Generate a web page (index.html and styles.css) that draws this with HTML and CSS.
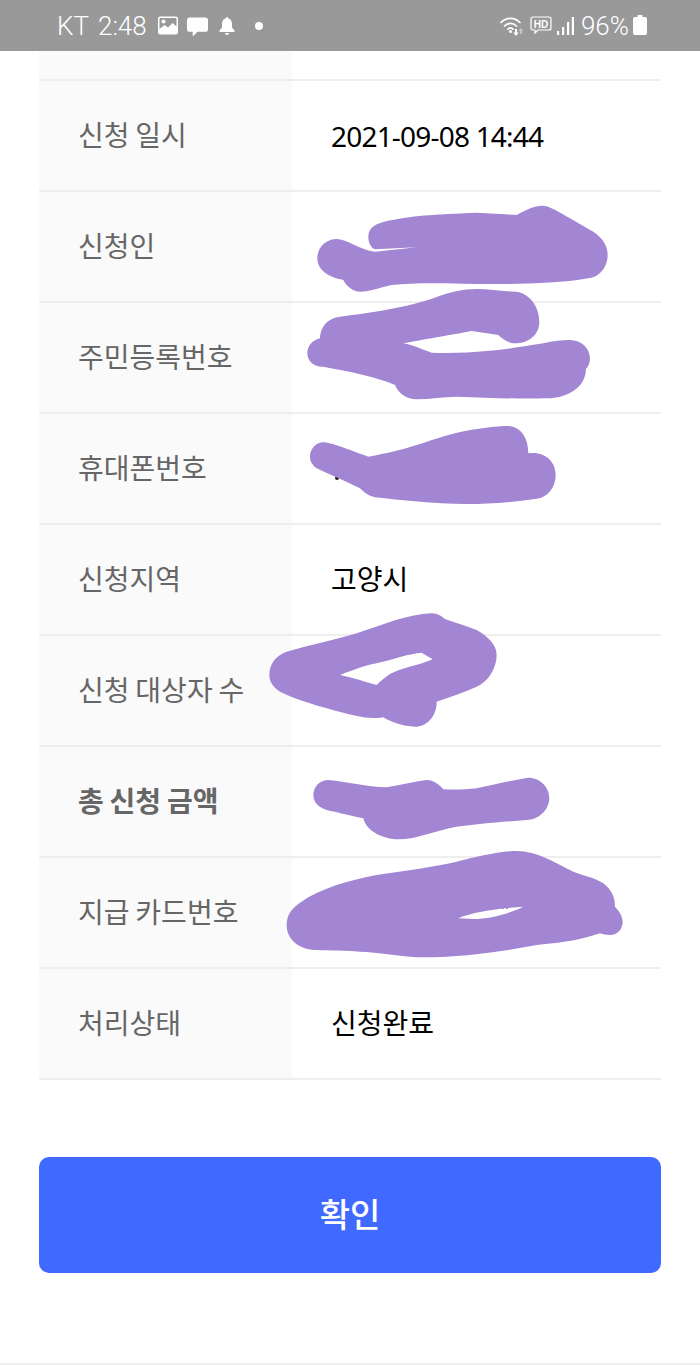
FILE: index.html
```html
<!DOCTYPE html>
<html lang="ko">
<head>
<meta charset="utf-8">
<title>신청 내역</title>
<link rel="stylesheet" href="styles.css">
</head>
<body>
<div class="page">
  <header class="status">
    <div class="status-left">
      <span class="carrier">KT</span>
      <span class="time">2:48</span>
      <svg class="ic ic-pic" viewBox="0 0 20 18"><path fill-rule="evenodd" fill="#fff" d="M2 0h16a2 2 0 0 1 2 2v14a2 2 0 0 1-2 2H2a2 2 0 0 1-2-2V2a2 2 0 0 1 2-2zM1.500 2v10.500l5-4 3.500 2.500 4.500-4.500 4 3.500V2a.5.5 0 0 0-.5-.5H2a.5.5 0 0 0-.5.5z"/><circle cx="5.500" cy="5" r="2" fill="#fff"/></svg>
      <svg class="ic ic-chat" viewBox="0 0 22 20"><path fill="#fff" d="M3 0h16a3 3 0 0 1 3 3v9a3 3 0 0 1-3 3h-8l-5 5v-5H3a3 3 0 0 1-3-3V3a3 3 0 0 1 3-3z"/></svg>
      <svg class="ic ic-bell" viewBox="0 0 16 18"><path fill="#fff" d="M8 0a1.500 1.500 0 0 1 1.500 1.500C12 2.300 13 4.500 13 7v3.500l2.500 3V15H.5v-1.500l2.500-3V7c0-2.500 1-4.700 3.500-5.500A1.500 1.500 0 0 1 8 0zM6 16h4a2 2 0 0 1-4 0z"/></svg>
      <span class="dot"></span>
    </div>
    <div class="status-right">
      <svg class="ic ic-wifi" viewBox="0 0 24 20"><g fill="none" stroke="#fff" stroke-width="1.700" stroke-linecap="round"><path d="M1 6.500C6.500 1 14.500 1 20 6.500"/><path d="M4.500 10c3.500-3.500 8.500-3.500 12 0"/><path d="M8 13.200c1.500-1.500 3.500-1.500 5 0"/></g><circle cx="10.500" cy="15.500" r="1.500" fill="#fff"/><path fill="#fff" d="M15 13h2v3.500h1.700L16 20l-2.700-3.500H15z"/><path fill="#c4c4c4" d="M21 12l2.500 3H22v3h-2v-3h-1.500z"/></svg>
      <svg class="ic ic-hd" viewBox="0 0 22 20"><path fill="none" stroke="#fff" stroke-width="1.200" d="M3 1h16a2 2 0 0 1 2 2v9a2 2 0 0 1-2 2H8l-3 3v-3H3a2 2 0 0 1-2-2V3a2 2 0 0 1 2-2z"/><text class="hd-label" x="11" y="11.500">HD</text></svg>
      <svg class="ic ic-signal" viewBox="0 0 17 18"><g fill="#fff"><rect x="0" y="14" width="2.200" height="4"/><rect x="5" y="10" width="2.200" height="8"/><rect x="10" y="5" width="2.200" height="13"/><rect x="14.800" y="0" width="2.200" height="18"/></g></svg>
      <span class="battery-text">96%</span>
      <svg class="ic ic-batt" viewBox="0 0 14 20"><path fill="#fff" d="M4.500 0h5v2H12a2 2 0 0 1 2 2v14a2 2 0 0 1-2 2H2a2 2 0 0 1-2-2V4a2 2 0 0 1 2-2h2.500z"/></svg>
    </div>
  </header>

  <main class="content">
    <dl class="table">
      <div class="row row-cut"><dt></dt><dd></dd></div>
      <div class="row"><dt>신청 일시</dt><dd class="date">2021-09-08 14:44</dd></div>
      <div class="row"><dt>신청인</dt><dd></dd></div>
      <div class="row"><dt>주민등록번호</dt><dd></dd></div>
      <div class="row"><dt>휴대폰번호</dt><dd></dd></div>
      <div class="row"><dt>신청지역</dt><dd>고양시</dd></div>
      <div class="row"><dt>신청 대상자 수</dt><dd></dd></div>
      <div class="row"><dt class="strong">총 신청 금액</dt><dd></dd></div>
      <div class="row"><dt>지급 카드번호</dt><dd></dd></div>
      <div class="row"><dt>처리상태</dt><dd>신청완료</dd></div>
    </dl>
    <button class="confirm" type="button">확인</button>
  </main>

  <svg class="scribbles" viewBox="0 0 700 1365">
    <circle class="speck" cx="337" cy="478" r="2"/>
    <circle class="speck" cx="503" cy="908" r=".8"/>
    <circle class="speck" cx="507" cy="908" r=".8"/>
    <g class="ink" transform="translate(260 190) scale(.3333)">
      <path d="M325,140 C325,110 350,100 385,92 C450,78 520,73 650,68 L770,75 C800,58 825,47 845,47 C870,47 890,62 1000,125 C1030,145 1043,170 1043,195 C1043,235 1015,262 985,265 C900,280 800,282 700,282 C600,282 480,275 395,285 C360,292 330,305 300,305 C280,305 260,290 250,270 C205,262 172,240 172,205 C172,170 200,147 230,147 C260,147 300,180 345,185 L470,172 L345,178 C335,175 325,160 325,140 Z"/>
      <path d="M180,445 C180,410 205,383 240,380 C320,372 450,350 520,325 C570,305 610,297 650,297 C690,297 730,305 770,305 C810,312 838,350 838,395 C838,435 805,460 765,460 C745,460 725,445 715,435 L635,423 C590,432 480,450 430,460 C460,465 490,480 515,488 C570,490 630,488 680,483 C740,478 800,468 850,460 C880,453 905,450 930,450 C965,450 990,475 990,505 C990,520 985,530 978,537 C978,590 925,625 860,625 C800,627 700,625 590,620 C550,620 510,628 470,628 C440,628 415,610 405,585 C350,560 270,545 190,530 C165,532 142,515 142,490 C142,465 160,450 180,445 Z"/>
      <path d="M150,800 C150,775 170,757 190,757 C215,757 280,785 325,800 C380,790 430,778 470,765 C530,745 580,728 620,722 C660,715 710,708 745,708 C780,710 805,740 805,790 C855,783 887,815 887,855 C887,895 860,925 825,927 C750,938 680,942 620,942 C520,942 420,930 345,922 C325,918 310,905 300,895 C260,875 200,850 170,835 C158,825 150,815 150,800 Z"/>
    </g>
    <g class="ink" transform="translate(260 600) scale(.3333)">
      <path d="M28,225 C28,190 50,165 80,155 C150,135 230,118 290,100 C360,78 440,42 515,40 C535,40 545,50 555,57 C590,70 620,78 650,90 C685,110 710,135 710,165 C710,205 685,245 650,260 C610,278 570,290 530,305 C530,350 500,380 465,380 C430,380 390,365 370,352 C350,358 300,352 250,338 C180,320 110,300 60,275 C40,262 28,245 28,225 Z M240,225 C280,210 320,195 350,190 C400,178 450,160 485,158 L518,178 C480,195 420,205 390,222 C375,232 360,245 350,255 C315,245 280,233 240,225 Z"/>
      <path d="M160,585 C160,560 180,540 205,540 C260,545 320,560 380,562 C420,555 460,545 500,540 C520,540 540,555 550,568 C590,570 620,568 650,565 C700,555 760,540 805,533 C840,533 868,560 868,595 C868,630 835,660 800,660 C730,665 650,672 590,680 C530,690 470,718 415,718 C370,718 320,695 310,655 C280,648 250,642 225,635 C190,632 160,615 160,585 Z"/>
      <path d="M80,975 C80,945 95,925 120,908 C180,865 270,840 350,825 C430,812 520,802 590,785 C650,770 720,753 770,753 C830,753 890,790 940,815 C980,830 1010,835 1030,850 C1055,870 1065,890 1065,920 C1080,935 1088,950 1088,965 C1088,990 1070,1005 1050,1005 C1040,1005 1030,1003 1020,1000 C950,1025 880,1030 830,1035 C730,1055 600,1072 500,1072 C420,1072 350,1055 300,1055 C260,1052 210,1052 170,1050 C120,1050 80,1020 80,975 Z M595,955 C640,935 720,925 790,920 C750,940 690,957 640,957 Z"/>
    </g>
  </svg>
</div>
</body>
</html>
```

FILE: styles.css
```css
* { box-sizing: border-box; }
html, body { margin: 0; padding: 0; background: #fff; }
body { font-family: "Noto Sans CJK KR", "Noto Sans", sans-serif; }

.page {
  position: relative;
  width: 700px;
  height: 1365px;
  overflow: hidden;
  display: flex;
  flex-direction: column;
  border-bottom: 2px solid #eeeff1;
}

.status {
  flex: none;
  height: 51px;
  background: #999;
  color: #fff;
  display: flex;
  justify-content: space-between;
  align-items: center;
  padding: 0 53px 0 57px;
  font-family: Roboto, sans-serif;
  font-size: 26px;
  font-weight: 300;
}
.status-left, .status-right { display: flex; align-items: center; }
.ic { display: block; flex: none; }
.carrier { margin-right: 9px; }
.time { margin-right: 11px; }
.ic-pic { width: 20px; height: 19px; margin-right: 9px; }
.ic-chat { width: 21px; height: 20px; margin-right: 11px; margin-top: 2px; }
.ic-bell { width: 16px; height: 18px; margin-right: 20px; }
.dot { width: 8px; height: 8px; border-radius: 50%; background: #fff; }
.ic-wifi { width: 24px; height: 20px; margin-right: 6px; }
.ic-hd { width: 22px; height: 20px; margin-right: 5px; }
.hd-label { font: 700 10px "Liberation Sans", sans-serif; fill: #fff; text-anchor: middle; }
.ic-signal { width: 17px; height: 18px; margin-right: 7px; }
.battery-text { margin-right: 4px; }
.ic-batt { width: 14px; height: 20px; margin-top: -2px; }

.content {
  flex: 1;
  padding: 0 39px;
  display: flex;
  flex-direction: column;
}
.table { margin: 0; }
.row {
  display: grid;
  grid-template-columns: 253px 1fr;
  height: 111px;
  border-bottom: 2px solid #eee;
  font-size: 28px;
}
.row-cut { height: 30px; }
.row dt {
  background: #fafafa;
  color: #666;
  padding: 0 0 4px 39px;
  word-spacing: -2px;
  display: flex;
  align-items: center;
}
.row dd {
  margin: 0;
  padding: 0 0 4px 39px;
  color: #000;
  display: flex;
  align-items: center;
}
.row dd.date {
  font-family: "Noto Sans", sans-serif;
  letter-spacing: -0.8px;
  padding-bottom: 0;
}
.row dt.strong { font-weight: 700; word-spacing: -2px; }

.confirm {
  margin-top: 77px;
  padding: 0 0 4px;
  height: 116px;
  flex: none;
  border: 0;
  border-radius: 10px;
  background: #3f69ff;
  color: #fff;
  font-family: inherit;
  font-size: 33px;
  font-weight: 500;
}

.scribbles {
  position: absolute;
  left: 0;
  top: 0;
  width: 700px;
  height: 1365px;
}
.speck { fill: #222; }
.ink path { fill: #a285d3; fill-rule: evenodd; }
```
